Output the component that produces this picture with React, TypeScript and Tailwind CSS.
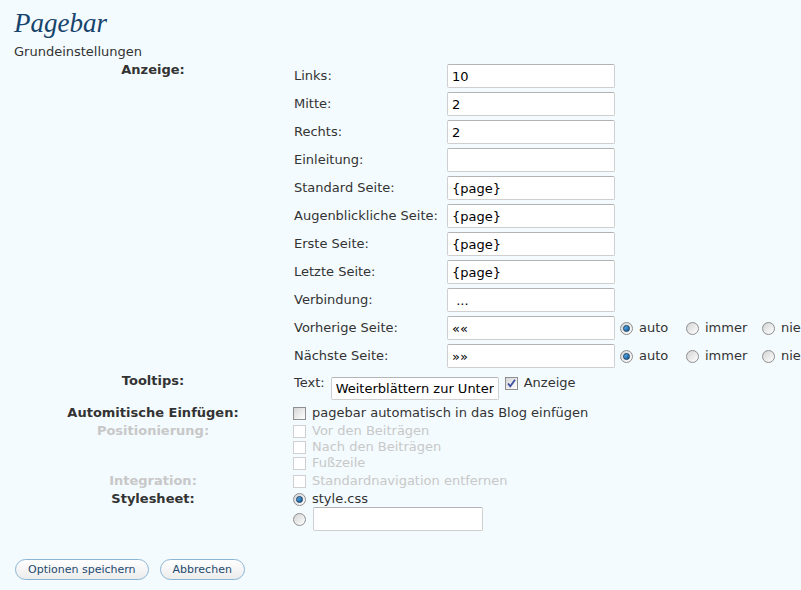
import React from "react";

type Field = { label: string; value: string; radios?: boolean };

const fields: Field[] = [
  { label: "Links:", value: "10" },
  { label: "Mitte:", value: "2" },
  { label: "Rechts:", value: "2" },
  { label: "Einleitung:", value: "" },
  { label: "Standard Seite:", value: "{page}" },
  { label: "Augenblickliche Seite:", value: "{page}" },
  { label: "Erste Seite:", value: "{page}" },
  { label: "Letzte Seite:", value: "{page}" },
  { label: "Verbindung:", value: " ..." },
  { label: "Vorherige Seite:", value: "««", radios: true },
  { label: "Nächste Seite:", value: "»»", radios: true },
];

function Radio({ checked = false }: { checked?: boolean }) {
  return (
    <span className="flex h-[13px] w-[13px] shrink-0 items-center justify-center rounded-full border border-[#8e8e8e] bg-gradient-to-br from-[#d4d4d4] to-white">
      {checked && (
        <span className="h-[7px] w-[7px] rounded-full border border-[#123a5e] bg-gradient-to-br from-[#5fb2ee] to-[#0f5c9c]" />
      )}
    </span>
  );
}

function Checkbox({ checked = false, disabled = false }: { checked?: boolean; disabled?: boolean }) {
  return (
    <span
      className={
        disabled
          ? "flex h-[13px] w-[13px] shrink-0 border border-[#d0d0d0] bg-white"
          : "flex h-[13px] w-[13px] shrink-0 items-center justify-center border border-[#8f8f8f] bg-gradient-to-br from-[#d6d6d6] to-white"
      }
    >
      {checked && (
        <svg width="11" height="11" viewBox="0 0 11 11">
          <path d="M2 5.5 L4.3 8.3 L9 1.8" fill="none" stroke="#3b4fa0" strokeWidth="1.8" />
        </svg>
      )}
    </span>
  );
}

function TextInput({ value, className }: { value: string; className: string }) {
  return (
    <input
      type="text"
      defaultValue={value}
      className={
        "rounded-[2px] border border-[#cfcfcf] border-t-[#b4b4b4] bg-white px-[4px] text-[13px] text-black outline-none " +
        className
      }
    />
  );
}

function RadioGroup() {
  return (
    <div className="ml-[5px] flex items-center">
      <div className="flex w-[66px] items-center gap-[6px]">
        <Radio checked />
        <span>auto</span>
      </div>
      <div className="flex w-[76px] items-center gap-[6px]">
        <Radio />
        <span>immer</span>
      </div>
      <div className="flex items-center gap-[6px]">
        <Radio />
        <span>nie</span>
      </div>
    </div>
  );
}

export default function App() {
  return (
    <div className="h-screen w-full overflow-hidden bg-[#f3fbfe] px-[14px] pt-[7px] font-['DejaVu_Sans',Verdana,sans-serif] text-[13px] leading-4 text-[#333]">
      <h2 className="font-['Liberation_Serif',Georgia,serif] text-[27px] leading-[32px] italic text-[#17446c]">
        Pagebar
      </h2>
      <p className="mt-[5px] whitespace-nowrap">Grundeinstellungen</p>

      <div className="mt-[2px] w-[900px]">
        {/* Anzeige */}
        <div className="flex">
          <div className="w-[278px] text-center font-bold">Anzeige:</div>
          <div className="pl-[2px]">
            {fields.map((f) => (
              <div key={f.label} className="flex h-[28px] items-center">
                <span className="w-[153px] whitespace-nowrap">{f.label}</span>
                <TextInput value={f.value} className="h-[24px] w-[168px]" />
                {f.radios && <RadioGroup />}
              </div>
            ))}
          </div>
        </div>

        {/* Tooltips */}
        <div className="flex h-[34px]">
          <div className="mt-[3px] w-[278px] text-center font-bold">Tooltips:</div>
          <div className="flex items-start pl-[2px] pt-[5px]">
            <span>Text:</span>
            <TextInput
              value="Weiterblättern zur Unterseite"
              className="ml-[6px] mt-[2px] h-[23px] w-[168px]"
            />
            <span className="ml-[6px] mt-[2px]">
              <Checkbox checked />
            </span>
            <span className="ml-[6px]">Anzeige</span>
          </div>
        </div>

        <div className="flex py-px">
          <div className="w-[278px] text-center font-bold">Automitische Einfügen:</div>
          <div className="flex items-center gap-[6px] pl-px">
            <Checkbox />
            <span>pagebar automatisch in das Blog einfügen</span>
          </div>
        </div>

        <div className="flex py-px text-[#c8c8c8]">
          <div className="w-[278px] text-center font-bold">Positionierung:</div>
          <div className="flex flex-col pl-px">
            {["Vor den Beiträgen", "Nach den Beiträgen", "Fußzeile"].map((t) => (
              <div key={t} className="flex items-center gap-[6px]">
                <Checkbox disabled />
                <span>{t}</span>
              </div>
            ))}
          </div>
        </div>

        <div className="flex py-px text-[#c8c8c8]">
          <div className="w-[278px] text-center font-bold">Integration:</div>
          <div className="flex items-center gap-[6px] pl-px">
            <Checkbox disabled />
            <span>Standardnavigation entfernen</span>
          </div>
        </div>

        <div className="flex py-px">
          <div className="w-[278px] text-center font-bold">Stylesheet:</div>
          <div className="flex flex-col pl-px">
            <div className="flex items-center gap-[6px]">
              <Radio checked />
              <span>style.css</span>
            </div>
            <div className="flex items-center gap-[7px]">
              <Radio />
              <TextInput value="" className="h-[24px] w-[170px]" />
            </div>
          </div>
        </div>
      </div>

      <div className="ml-px mt-[27px] flex gap-[11px]">
        <button
          type="button"
          className="h-[21px] rounded-full border border-[#8ab5d4] bg-gradient-to-b from-white to-[#ececec] px-[12px] text-[11px] leading-[19px] text-[#234a70]"
        >
          Optionen speichern
        </button>
        <button
          type="button"
          className="h-[21px] rounded-full border border-[#8ab5d4] bg-gradient-to-b from-white to-[#ececec] px-[12px] text-[11px] leading-[19px] text-[#234a70]"
        >
          Abbrechen
        </button>
      </div>
    </div>
  );
}
